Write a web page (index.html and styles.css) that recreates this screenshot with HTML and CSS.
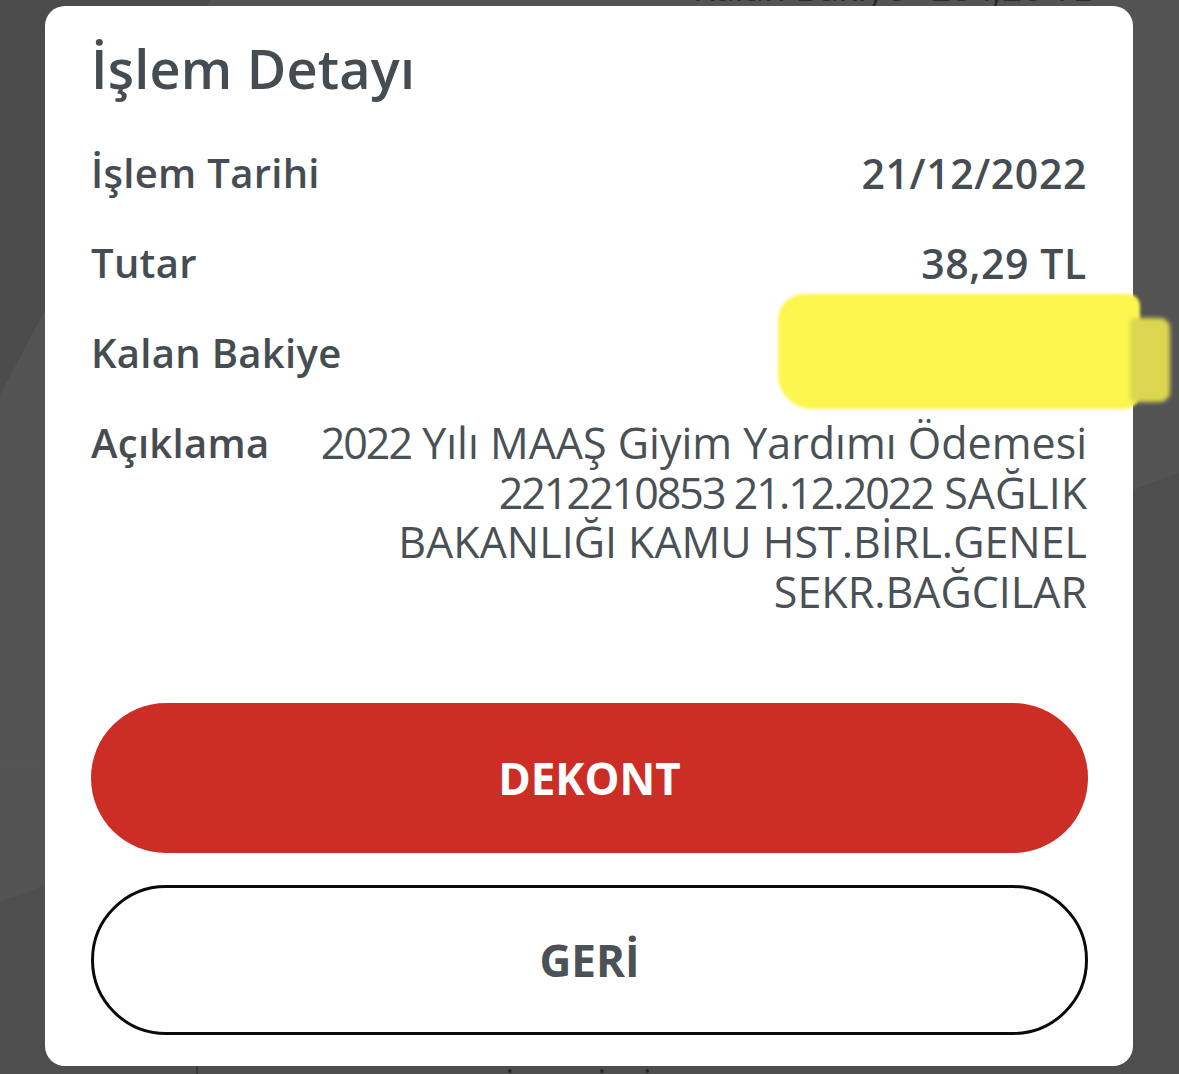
FILE: index.html
```html
<!DOCTYPE html>
<html lang="tr">
<head>
<meta charset="utf-8">
<title>İşlem Detayı</title>
<link rel="stylesheet" href="styles.css">
</head>
<body>
<div class="screen">
  <div class="peek-top">
    <span>Kalan Bakiye</span>
    <span>284,20 TL</span>
  </div>
  <div class="peek-bottom">
    <span class="peek-num">10</span>
    <span class="peek-div"></span>
    <span class="peek-card">**** **** 1L0 İŞYERİ DİLMADE</span>
  </div>
</div>

<div class="modal">
  <h1 class="title">İşlem Detayı</h1>
  <div class="rows">
    <div class="row">
      <span class="label">İşlem Tarihi</span>
      <span class="value">21/12/2022</span>
    </div>
    <div class="row">
      <span class="label">Tutar</span>
      <span class="value">38,29 TL</span>
    </div>
    <div class="row">
      <span class="label">Kalan Bakiye</span>
      <span class="value"></span>
    </div>
    <div class="row">
      <span class="label">Açıklama</span>
      <span class="desc"><span class="num">2022</span> Yılı MAAŞ Giyim Yardımı Ödemesi<br><span class="num">2212210853 21.12.2022</span> SAĞLIK<br>BAKANLIĞI KAMU HST.BİRL.GENEL<br>SEKR.BAĞCILAR</span>
    </div>
  </div>
  <div class="actions">
    <button class="btn btn-primary">DEKONT</button>
    <button class="btn btn-outline">GERİ</button>
  </div>
</div>

<div class="highlight"></div>
<div class="highlight-ext"></div>
</body>
</html>
```

FILE: styles.css
```css
html, body {
  margin: 0;
  padding: 0;
}
html {
  overflow: hidden;
}
body {
  width: 1179px;
  height: 1074px;
  overflow: hidden;
  position: relative;
  font-family: "Open Sans", "Noto Sans", sans-serif;
  background:
    linear-gradient(118deg, rgba(0,0,0,0.10) 0 12%, rgba(0,0,0,0) 12% 100%),
    linear-gradient(160deg, rgba(255,255,255,0.03) 0 60%, rgba(0,0,0,0) 60%),
    #4e4e4e;
}

/* underlying screen, dimmed */
.screen {
  height: 1074px;
  overflow: hidden;
  display: flex;
  flex-direction: column;
  justify-content: space-between;
}
.peek-top {
  display: flex;
  gap: 26px;
  justify-content: flex-end;
  padding-right: 88px;
  margin-top: -32px;
  font-size: 36px;
  line-height: 40px;
  color: #2a2a2a;
}
.peek-bottom {
  display: flex;
  align-items: flex-start;
  margin-bottom: -60px;
  padding-left: 96px;
  height: 68px;
  color: #262626;
}
.peek-num {
  font-size: 66px;
  line-height: 68px;
  width: 100px;
}
.peek-div {
  width: 2px;
  height: 68px;
  background: #3a3a3a;
  margin-right: 60px;
}
.peek-card {
  font-size: 36px;
  line-height: 40px;
  margin-top: 4px;
}

/* modal */
.modal {
  position: absolute;
  left: 45px;
  top: 6px;
  width: 1088px;
  height: 1060px;
  box-sizing: border-box;
  background: #ffffff;
  border-radius: 20px;
  padding: 35px 46px 31px 46px;
  display: flex;
  flex-direction: column;
  color: #454d53;
}
.title {
  margin: 0;
  font-size: 54px;
  line-height: 54px;
  font-weight: 600;
  letter-spacing: 0.2px;
}
.rows {
  margin-top: 53px;
  display: flex;
  flex-direction: column;
  gap: 40px;
}
.row {
  display: flex;
  justify-content: space-between;
  align-items: flex-start;
  font-size: 40px;
  line-height: 50px;
  min-height: 50px;
}
.label {
  font-weight: 600;
  white-space: nowrap;
  letter-spacing: 0.3px;
}
.value {
  font-weight: 600;
  white-space: nowrap;
  font-size: 41px;
  letter-spacing: 0.6px;
}
.desc {
  font-weight: 400;
  font-size: 43px;
  text-align: right;
  line-height: 49.7px;
  color: #4a5156;
}
.num {
  letter-spacing: -2px;
}

.actions {
  margin-top: auto;
  display: flex;
  flex-direction: column;
  gap: 32px;
}
.btn {
  height: 150px;
  border-radius: 75px;
  font-family: "Open Sans", "Noto Sans", sans-serif;
  font-size: 44px;
  font-weight: 700;
  letter-spacing: 0;
  cursor: pointer;
  box-sizing: border-box;
  width: 997px;
  margin-left: 0;
}
.btn-primary {
  background: #cc2d25;
  color: #ffffff;
  border: none;
}
.btn-outline {
  background: #ffffff;
  color: #4a5157;
  border: 3px solid #0a0a0a;
}

/* yellow marker scribble over the balance */
.highlight {
  position: absolute;
  left: 778px;
  top: 294px;
  width: 362px;
  height: 115px;
  background: #fdf64e;
  border-radius: 26px 12px 16px 34px;
  filter: blur(1.5px);
}
.highlight-ext {
  position: absolute;
  left: 1130px;
  top: 318px;
  width: 40px;
  height: 84px;
  background: #dcd650;
  border-radius: 4px 10px 10px 4px;
  filter: blur(2px);
}
```
